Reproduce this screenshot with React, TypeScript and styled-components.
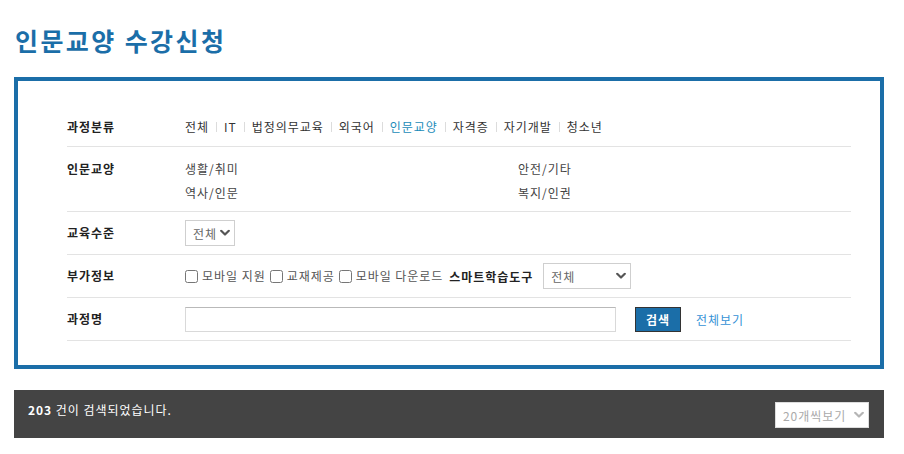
import React from "react";
import styled, { createGlobalStyle } from "styled-components";

const BLUE = "#1b6ea8";

const GlobalStyle = createGlobalStyle`
  html, body { margin: 0; padding: 0; background: #fff; }
  body {
    font-family: "Noto Sans CJK KR", "Noto Sans", sans-serif;
    font-size: 12px;
    letter-spacing: 0.08em;
    color: #333;
  }
  * { box-sizing: border-box; }
`;

const Page = styled.div`
  width: 904px;
  padding: 25px 20px 0 14px;
`;

const Title = styled.h2`
  margin: 0 0 22px 1px;
  font-size: 25px;
  line-height: 30px;
  font-weight: 700;
  color: ${BLUE};
  letter-spacing: 2.4px;
`;

const SearchBox = styled.div`
  border: 4px solid ${BLUE};
  padding: 23px 29px 24px 49px;
`;

const Row = styled.div<{ $pad?: string; $align?: string; $h?: number }>`
  display: grid;
  grid-template-columns: 118px 1fr;
  align-items: ${(p) => p.$align || "center"};
  min-height: ${(p) => (p.$h ?? 42) + 1}px;
  padding: ${(p) => p.$pad || "0"};
  border-bottom: 1px solid #e3e3e3;
`;

const Label = styled.div<{ $lh?: number }>`
  font-size: 12px;
  font-weight: 700;
  color: #222;
  line-height: ${(p) => p.$lh ?? 18}px;
`;

const Categories = styled.div`
  display: flex;
  align-items: center;
  font-size: 12px;
  line-height: 18px;
`;

const CatLink = styled.a<{ $active?: boolean }>`
  color: ${(p) => (p.$active ? "#1a8bb9" : "#333")};
  text-decoration: none;
  white-space: nowrap;
`;

const Sep = styled.span`
  display: inline-block;
  width: 1px;
  height: 10px;
  background: #dcdcdc;
  margin: 0 7px;
`;

const SubGrid = styled.div`
  display: grid;
  grid-template-columns: 1fr 1fr;
  line-height: 24px;
  color: #444;
  font-size: 12px;
`;

const Controls = styled.div`
  display: flex;
  align-items: center;
`;

const SelectWrap = styled.div<{ $w: number }>`
  position: relative;
  width: ${(p) => p.$w}px;
  height: 26px;
  flex: none;
`;

const Select = styled.select<{ $color?: string; $border?: string }>`
  appearance: none;
  -webkit-appearance: none;
  width: 100%;
  height: 100%;
  margin: 0;
  padding: 0 0 0 7px;
  border: 1px solid ${(p) => p.$border || "#cfcfcf"};
  border-radius: 0;
  background: #fff;
  font-family: inherit;
  font-size: 12px;
  letter-spacing: inherit;
  color: ${(p) => p.$color || "#666"};
  outline: none;
`;

const Chevron = styled.svg`
  position: absolute;
  top: 50%;
  right: 5px;
  transform: translateY(-50%);
  pointer-events: none;
`;

const CheckLabel = styled.label`
  display: inline-flex;
  align-items: center;
  color: #555;
  margin-right: 4px;
  white-space: nowrap;
  line-height: 18px;
`;

const Check = styled.input`
  width: 13px;
  height: 13px;
  margin: 0 4px 0 0;
`;

const Strong = styled.span`
  font-weight: 700;
  color: #222;
  margin: 0 10px 0 2px;
  white-space: nowrap;
`;

const TextInput = styled.input`
  width: 431px;
  height: 25px;
  margin: 0;
  border: 1px solid #d9d9d9;
  border-top-color: #b9b9b9;
  padding: 0 6px;
  font-family: inherit;
  font-size: 12px;
`;

const SearchButton = styled.button`
  width: 46px;
  height: 25px;
  margin-left: 19px;
  padding: 0;
  background: ${BLUE};
  border: 1px solid #333;
  color: #fff;
  font-family: inherit;
  font-size: 12px;
  letter-spacing: inherit;
  font-weight: 700;
`;

const ViewAll = styled.a`
  margin-left: 15px;
  color: #3592d6;
  text-decoration: none;
  font-size: 12px;
`;

const ResultBar = styled.div`
  margin-top: 21px;
  height: 48px;
  background: #444;
  display: flex;
  align-items: flex-start;
  justify-content: space-between;
  padding: 12px 15px 0 14px;
`;

const ResultText = styled.div`
  color: #fff;
  font-size: 12px;
  line-height: 16px;
  b { font-weight: 700; }
`;

const ChevronIcon = ({ color }: { color: string }) => (
  <Chevron width="10" height="7" viewBox="0 0 10 7">
    <polyline
      points="1.2,1.3 5,5 8.8,1.3"
      fill="none"
      stroke={color}
      strokeWidth="2.2"
      strokeLinecap="round"
      strokeLinejoin="round"
    />
  </Chevron>
);

const categories = ["전체", "IT", "법정의무교육", "외국어", "인문교양", "자격증", "자기개발", "청소년"];
const subs = ["생활/취미", "안전/기타", "역사/인문", "복지/인권"];

export default function App() {
  return (
    <>
      <GlobalStyle />
      <Page>
        <Title>인문교양 수강신청</Title>
        <SearchBox>
          <Row $pad="4px 0 0 0">
            <Label>과정분류</Label>
            <Categories>
              {categories.map((c, i) => (
                <React.Fragment key={c}>
                  {i > 0 && <Sep />}
                  <CatLink href="#" $active={c === "인문교양"}>
                    {c}
                  </CatLink>
                </React.Fragment>
              ))}
            </Categories>
          </Row>
          <Row $align="start" $pad="10px 0 6px 0" $h={64}>
            <Label $lh={24}>인문교양</Label>
            <SubGrid>
              {subs.map((s) => (
                <div key={s}>{s}</div>
              ))}
            </SubGrid>
          </Row>
          <Row>
            <Label>교육수준</Label>
            <Controls>
              <SelectWrap $w={50}>
                <Select defaultValue="all">
                  <option value="all">전체</option>
                </Select>
                <ChevronIcon color="#555" />
              </SelectWrap>
            </Controls>
          </Row>
          <Row>
            <Label>부가정보</Label>
            <Controls>
              <CheckLabel>
                <Check type="checkbox" />
                모바일 지원
              </CheckLabel>
              <CheckLabel>
                <Check type="checkbox" />
                교재제공
              </CheckLabel>
              <CheckLabel>
                <Check type="checkbox" />
                모바일 다운로드
              </CheckLabel>
              <Strong>스마트학습도구</Strong>
              <SelectWrap $w={88}>
                <Select defaultValue="all">
                  <option value="all">전체</option>
                </Select>
                <ChevronIcon color="#555" />
              </SelectWrap>
            </Controls>
          </Row>
          <Row>
            <Label>과정명</Label>
            <Controls>
              <TextInput type="text" />
              <SearchButton type="button">검색</SearchButton>
              <ViewAll href="#">전체보기</ViewAll>
            </Controls>
          </Row>
        </SearchBox>
        <ResultBar>
          <ResultText>
            <b>203</b> 건이 검색되었습니다.
          </ResultText>
          <SelectWrap $w={94}>
            <Select defaultValue="20" $color="#aaa" $border="#ddd">
              <option value="20">20개씩보기</option>
            </Select>
            <ChevronIcon color="#b5b5b5" />
          </SelectWrap>
        </ResultBar>
      </Page>
    </>
  );
}
